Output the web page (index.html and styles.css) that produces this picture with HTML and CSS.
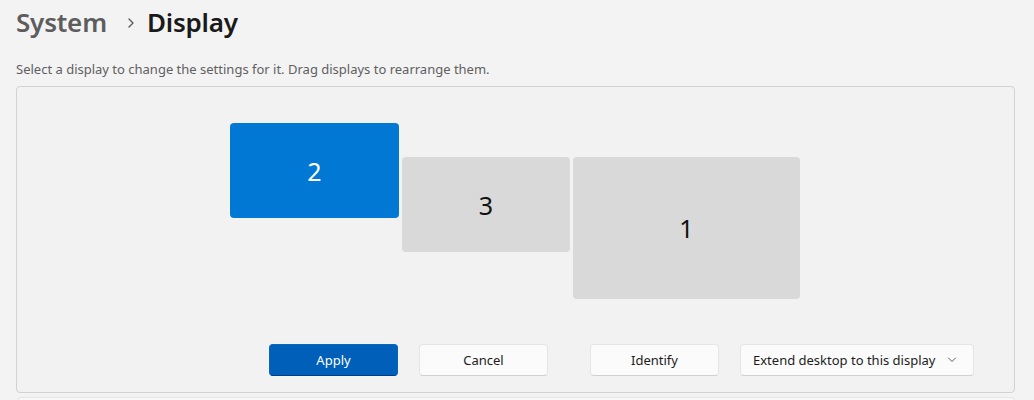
FILE: index.html
```html
<!DOCTYPE html>
<html lang="en">
<head>
    <meta charset="UTF-8">
    <title>Display</title>
    <link rel="stylesheet" href="styles.css">
</head>
<body>
    <div class="page">
        <h1 class="breadcrumb">
            <span class="crumb-parent">System</span>
            <svg class="crumb-sep" width="8" height="10" viewBox="0 0 8 10"><path d="M2 1l4 4-4 4" fill="none" stroke="#5d5d5d" stroke-width="1.4" stroke-linecap="round" stroke-linejoin="round"/></svg>
            <span class="crumb-current">Display</span>
        </h1>

        <p class="hint">Select a display to change the settings for it. Drag displays to rearrange them.</p>

        <div class="arrange-panel">
            <div class="monitor-canvas">
                <div class="monitor selected monitor-2">2</div>
                <div class="monitor monitor-3">3</div>
                <div class="monitor monitor-1">1</div>
            </div>
            <div class="panel-actions">
                <button class="btn btn-accent">Apply</button>
                <button class="btn">Cancel</button>
                <button class="btn btn-identify">Identify</button>
                <button class="btn btn-select">
                    Extend desktop to this display
                    <svg width="10" height="6" viewBox="0 0 10 6"><path d="M1.5 1l3.5 3.5 3.5-3.5" fill="none" stroke="#5d5d5d" stroke-width="1" stroke-linecap="round" stroke-linejoin="round"/></svg>
                </button>
            </div>
        </div>

        <div class="next-card"></div>
    </div>
</body>
</html>
```

FILE: styles.css
```css
body {
    margin: 0;
    background-color: #f3f3f3;
    font-family: "Noto Sans", "Open Sans", sans-serif;
    color: #1b1b1b;
    overflow: hidden;
}
.page {
    padding: 0 19px 0 16px;
}
.breadcrumb {
    display: flex;
    align-items: center;
    margin: 0;
    padding-top: 2px;
    height: 40px;
    font-size: 26px;
    font-weight: 600;
    letter-spacing: -0.2px;
}
.crumb-parent {
    color: #5d5d5d;
}
.crumb-sep {
    margin: 2px 12px 0 20px;
}
.crumb-current {
    color: #1a1a1a;
}
.hint {
    margin: 17px 0 7px;
    font-size: 13px;
    line-height: 20px;
    color: #5f5f5f;
}
.arrange-panel {
    background-color: #f2f2f2;
    border: 1px solid #d2d2d2;
    border-radius: 4px;
    height: 305px;
}
.monitor-canvas {
    position: relative;
    height: 257px;
}
.monitor {
    position: absolute;
    display: flex;
    align-items: center;
    justify-content: center;
    background-color: #d9d9d9;
    border-radius: 4px;
    font-size: 25px;
    font-weight: 400;
    color: #111;
}
.monitor.selected {
    background-color: #0078d4;
    color: #fff;
}
.monitor-2 {
    left: 213px;
    top: 36px;
    width: 169px;
    height: 95px;
}
.monitor-3 {
    left: 385px;
    top: 70px;
    width: 168px;
    height: 95px;
}
.monitor-1 {
    left: 556px;
    top: 70px;
    width: 227px;
    height: 142px;
}
.panel-actions {
    display: flex;
    gap: 21px;
    padding-left: 252px;
}
.btn {
    height: 32px;
    width: 129px;
    padding: 0 12px;
    font-family: inherit;
    font-size: 13px;
    color: #1b1b1b;
    background-color: #fbfbfb;
    border: 1px solid #e5e5e5;
    border-bottom-color: #d0d0d0;
    border-radius: 4px;
}
.btn-accent {
    background-color: #005fb8;
    border-color: #0a66bd;
    border-bottom-color: #003e8a;
    color: #fff;
}
.btn-identify {
    margin-left: 21px;
}
.btn-select {
    width: 234px;
    display: flex;
    align-items: center;
    justify-content: space-between;
    padding: 0 16px 0 12px;
}
.next-card {
    margin: 4px 0 0 1px;
    height: 20px;
    background-color: #f8f8f8;
    border: 1px solid #e5e5e5;
    border-radius: 4px;
}
```
